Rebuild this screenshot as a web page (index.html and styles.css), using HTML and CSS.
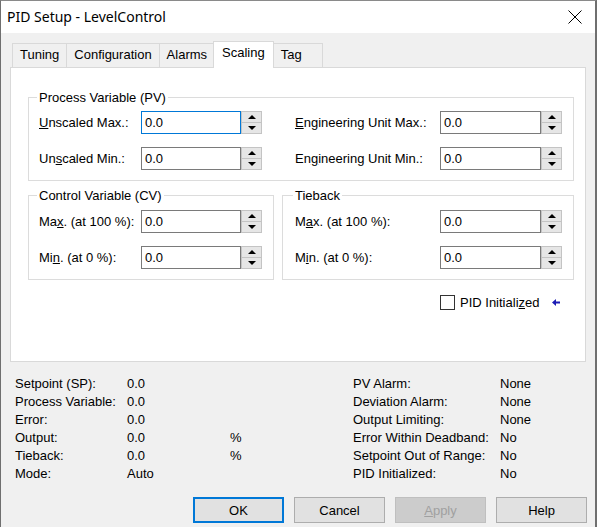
FILE: index.html
```html
<!DOCTYPE html>
<html lang="en">
<head>
    <meta charset="UTF-8">
    <title>PID Setup - LevelControl</title>
    <link rel="stylesheet" href="styles.css">
</head>
<body>
    <div class="window">
        <div class="titlebar">
            <span class="title">PID Setup - LevelControl</span>
            <svg class="close-icon" width="14" height="14" viewBox="0 0 14 14">
                <path d="M0.5 0.5 L13.5 13.5 M13.5 0.5 L0.5 13.5" stroke="#000" stroke-width="1" fill="none"/>
            </svg>
        </div>

        <div class="tabs">
            <div class="tab">Tuning</div>
            <div class="tab">Configuration</div>
            <div class="tab">Alarms</div>
            <div class="tab active">Scaling</div>
            <div class="tab">Tag</div>
        </div>

        <div class="panel">
            <fieldset class="group group-pv">
                <legend>Process Variable (PV)</legend>
                <div class="fields fields-pv">
                    <span class="label"><u>U</u>nscaled Max.:</span>
                    <div class="spin-edit focused">
                        <div class="edit">0.0</div>
                        <div class="spin"><span class="up"></span><span class="down"></span></div>
                    </div>
                    <span></span>
                    <span class="label"><u>E</u>ngineering Unit Max.:</span>
                    <div class="spin-edit">
                        <div class="edit">0.0</div>
                        <div class="spin"><span class="up"></span><span class="down"></span></div>
                    </div>

                    <span class="label">Un<u>s</u>caled Min.:</span>
                    <div class="spin-edit">
                        <div class="edit">0.0</div>
                        <div class="spin"><span class="up"></span><span class="down"></span></div>
                    </div>
                    <span></span>
                    <span class="label">En<u>g</u>ineering Unit Min.:</span>
                    <div class="spin-edit">
                        <div class="edit">0.0</div>
                        <div class="spin"><span class="up"></span><span class="down"></span></div>
                    </div>
                </div>
            </fieldset>

            <div class="group-row">
                <fieldset class="group group-cv">
                    <legend>Control Variable (CV)</legend>
                    <div class="fields fields-cv">
                        <span class="label">Ma<u>x</u>. (at 100 %):</span>
                        <div class="spin-edit">
                            <div class="edit">0.0</div>
                            <div class="spin"><span class="up"></span><span class="down"></span></div>
                        </div>
                        <span class="label">Mi<u>n</u>. (at 0 %):</span>
                        <div class="spin-edit">
                            <div class="edit">0.0</div>
                            <div class="spin"><span class="up"></span><span class="down"></span></div>
                        </div>
                    </div>
                </fieldset>

                <fieldset class="group group-tb">
                    <legend>Tieback</legend>
                    <div class="fields fields-tb">
                        <span class="label">M<u>a</u>x. (at 100 %):</span>
                        <div class="spin-edit">
                            <div class="edit">0.0</div>
                            <div class="spin"><span class="up"></span><span class="down"></span></div>
                        </div>
                        <span class="label">M<u>i</u>n. (at 0 %):</span>
                        <div class="spin-edit">
                            <div class="edit">0.0</div>
                            <div class="spin"><span class="up"></span><span class="down"></span></div>
                        </div>
                    </div>
                </fieldset>
            </div>

            <div class="check-row">
                <span class="checkbox"></span>
                <span class="check-label">PID Initiali<u>z</u>ed</span>
                <svg class="arrow" width="8" height="7" viewBox="0 0 8 7">
                    <path d="M0 3.5 L4 0 L4 2.5 L8 2.5 L8 4.5 L4 4.5 L4 7 Z" fill="#1c1cb4"/>
                </svg>
            </div>
        </div>

        <div class="status">
            <div class="status-left">
                <span>Setpoint (SP):</span><span>0.0</span><span></span>
                <span>Process Variable:</span><span>0.0</span><span></span>
                <span>Error:</span><span>0.0</span><span></span>
                <span>Output:</span><span>0.0</span><span>%</span>
                <span>Tieback:</span><span>0.0</span><span>%</span>
                <span>Mode:</span><span>Auto</span><span></span>
            </div>
            <div class="status-right">
                <span>PV Alarm:</span><span>None</span>
                <span>Deviation Alarm:</span><span>None</span>
                <span>Output Limiting:</span><span>None</span>
                <span>Error Within Deadband:</span><span>No</span>
                <span>Setpoint Out of Range:</span><span>No</span>
                <span>PID Initialized:</span><span>No</span>
            </div>
        </div>

        <div class="buttons">
            <button class="btn default">OK</button>
            <button class="btn">Cancel</button>
            <button class="btn disabled"><u>A</u>pply</button>
            <button class="btn">Help</button>
        </div>
    </div>
</body>
</html>
```

FILE: styles.css
```css
* {
    box-sizing: border-box;
    margin: 0;
    padding: 0;
}

body {
    width: 597px;
    height: 527px;
    overflow: hidden;
    font-family: 'Liberation Sans', Arial, sans-serif;
    font-size: 13px;
    color: #000;
    background: #f0f0f0;
}

.window {
    width: 597px;
    height: 527px;
    background: #f0f0f0;
    border-top: 1px solid #8a8a8a;
    border-left: 1px solid #6f6f6f;
    border-right: 2px solid #6f6f6f;
}

/* title bar */
.titlebar {
    height: 32px;
    background: #fff;
    display: flex;
    align-items: center;
    justify-content: space-between;
    padding: 0 13px 0 6px;
}

.title {
    font-family: 'Noto Sans', 'Open Sans', sans-serif;
    font-size: 14px;
    color: #000;
    padding-bottom: 1px;
}

.close-icon {
    display: block;
}

/* tabs */
.tabs {
    display: flex;
    align-items: flex-end;
    height: 27px;
    margin-top: 8px;
    margin-left: 11px;
    margin-bottom: -1px;
}

.tab {
    min-width: 50px;
    height: 25px;
    padding: 3px 7px 0;
    background: #f0f0f0;
    border: 1px solid #d9d9d9;
    border-bottom: none;
    margin-right: -1px;
    white-space: nowrap;
}

.tab.active {
    position: relative;
    z-index: 2;
    height: 27px;
    padding: 3px 8px 0;
    margin: 0 -1px 0 -1px;
    background: #fff;
}

/* panel */
.panel {
    position: relative;
    z-index: 1;
    width: 576px;
    height: 295px;
    margin-left: 9px;
    background: #fff;
    border: 1px solid #d9d9d9;
}

.group {
    border: 1px solid #dcdcdc;
    min-width: 0;
}

.group legend {
    margin-left: -2px;
    padding: 0 2px;
    line-height: 15px;
}

.group-pv {
    width: 546px;
    margin: 22px 0 0 17px;
    padding: 6px 11px 10px 10px;
}

.group-row {
    display: flex;
    gap: 8px;
    margin: 7px 0 0 17px;
}

.group-cv {
    width: 246px;
    padding: 7px 10px 10px 10px;
}

.group-tb {
    width: 292px;
    padding: 7px 10px 10px 12px;
}

.fields {
    display: grid;
    row-gap: 13px;
    align-items: center;
}

.fields-pv {
    grid-template-columns: 102px 121px 33px 145px 122px;
}

.fields-cv {
    grid-template-columns: 102px 121px;
}

.fields-tb {
    grid-template-columns: 145px 122px;
}

.label {
    white-space: nowrap;
}

/* edit with spin buttons */
.spin-edit {
    display: flex;
    height: 23px;
}

.edit {
    flex: 1;
    border: 1px solid #7a7a7a;
    background: #fff;
    padding: 3px 0 0 3px;
    line-height: 16px;
}

.spin-edit.focused .edit {
    border-color: #0078d7;
}

.spin {
    width: 21px;
    display: flex;
    flex-direction: column;
    background: #e6e6e6;
    border: 1px solid #c4c4c4;
}

.spin span {
    flex: 1;
    display: flex;
    align-items: center;
    justify-content: center;
}

.spin .up {
    border-bottom: 1px solid #c4c4c4;
}

.spin .up::before {
    content: '';
    border-left: 4px solid transparent;
    border-right: 4px solid transparent;
    border-bottom: 4px solid #000;
}

.spin .down::before {
    content: '';
    border-left: 4px solid transparent;
    border-right: 4px solid transparent;
    border-top: 4px solid #000;
}

/* checkbox */
.check-row {
    display: flex;
    align-items: center;
    margin: 15px 0 0 429px;
}

.checkbox {
    width: 15px;
    height: 15px;
    border: 1px solid #333;
    background: #fff;
}

.check-label {
    margin-left: 5px;
}

.arrow {
    display: block;
    margin-left: 12px;
}

/* status */
.status {
    display: flex;
    margin: 13px 0 0 14px;
    line-height: 18px;
}

.status-left {
    width: 338px;
    display: grid;
    grid-template-columns: 112px 103px auto;
}

.status-right {
    display: grid;
    grid-template-columns: 147px auto;
}

/* buttons */
.buttons {
    display: flex;
    gap: 10px;
    margin: 14px 0 0 192px;
}

.btn {
    width: 91px;
    height: 26px;
    font-family: 'Liberation Sans', Arial, sans-serif;
    font-size: 13px;
    color: #000;
    background: #e1e1e1;
    border: 1px solid #adadad;
}

.btn.default {
    border: 2px solid #0078d7;
}

.btn.disabled {
    background: #cccccc;
    border-color: #bfbfbf;
    color: #a0a0a0;
}
```
